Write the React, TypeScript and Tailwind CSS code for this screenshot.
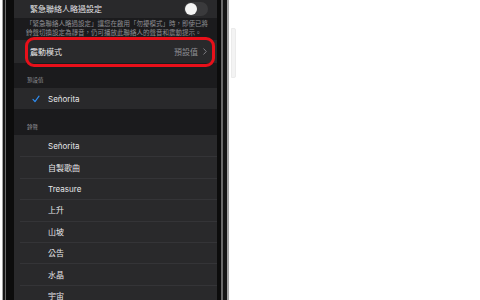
import React from 'react';

const ringtones = ['Señorita', '自製歌曲', 'Treasure', '上升', '山坡', '公告', '水晶', '宇宙'];

const Toggle: React.FC = () => (
    <div className="w-[24px] h-[14px] rounded-full bg-[#3a3a3c] flex items-center">
        <div className="w-[12px] h-[12px] ml-[1px] rounded-full bg-[#f4f4f4]" />
    </div>
);

const Screen: React.FC = () => (
    <div className="h-full bg-[#1b1b1d] text-[8px] text-[#e6e6e8] overflow-hidden">
        {/* Emergency bypass */}
        <div className="h-[18px] bg-[#29292b] flex items-center justify-between pl-[16px] pr-[9px]">
            <span>緊急聯絡人略過設定</span>
            <Toggle />
        </div>
        <div className="h-[22px] pl-[12px] pt-[2px] text-[6.5px] leading-[9px] text-[#8e8e93] whitespace-nowrap">
            「緊急聯絡人略過設定」讓您在啟用「勿擾模式」時，即使已將
            <br />
            鈴聲切換設定為靜音，仍可播放此聯絡人的聲音和震動提示。
        </div>

        {/* Vibration row, marked */}
        <div className="relative h-[23px] bg-[#29292b] flex items-center justify-between pl-[16px] pr-[10px]">
            <span>震動模式</span>
            <div className="flex items-center gap-[5px] text-[#8e8e93]">
                <span>預設值</span>
                <svg width="4" height="7" viewBox="0 0 4 7" fill="none">
                    <path d="M0.5 0.5 L3.3 3.5 L0.5 6.5" stroke="#7c7c80" strokeWidth="1" />
                </svg>
            </div>
            <div className="absolute left-[11px] right-[2px] top-[-3px] bottom-[-4px] border-[3px] border-[#e8101a] rounded-[9px]" />
        </div>

        <div className="h-[25px] flex items-end pb-[4px] pl-[13px] text-[5.5px] leading-[7px] text-[#8e8e93]">預設值</div>
        <div className="h-[21px] bg-[#29292b] flex items-center pl-[18px] gap-[8px]">
            <svg width="8" height="8" viewBox="0 0 12 12" fill="none">
                <path d="M1.5 6.5 L4.5 9.8 L10.5 1.8" stroke="#2f8cf0" strokeWidth="1.8" strokeLinecap="round" strokeLinejoin="round" />
            </svg>
            <span>Señorita</span>
        </div>

        <div className="h-[26px] flex items-end pb-[4.5px] pl-[13px] text-[5.5px] leading-[7px] text-[#8e8e93]">鈴聲</div>
        <div className="bg-[#29292b]">
            {ringtones.map((name, i) => (
                <div key={name + i} className="h-[21.4px] pl-[6px]">
                    <div className={i === 0 ? 'h-full flex items-center pl-[28px]' : 'h-full flex items-center pl-[28px] border-t border-[#343437]'}>
                        {name}
                    </div>
                </div>
            ))}
        </div>
    </div>
);

export default function App() {
    return (
        <div className="w-[480px] h-[300px] bg-white overflow-hidden flex font-['Inter','Noto_Sans_CJK_TC',sans-serif]">
            {/* phone frame */}
            <div className="ml-[2px] h-full w-[227px] bg-[#a5a5a5] pl-[1px] pr-[2px]">
                <div className="h-full bg-[#161616] pl-[2px] pr-[4px]">
                    <div className="h-full bg-[#6b6b6b] pl-[1px] pr-[2px]">
                        <div className="h-full bg-[#0c0c0c] pl-[8px] pr-[4px]">
                            <Screen />
                        </div>
                    </div>
                </div>
            </div>
            {/* side button */}
            <div className="ml-[2px] mt-[28px] w-[5px] h-[50px] rounded-r-[2px] bg-[#f3f3f3] border border-[#ebebeb]" />
        </div>
    );
}
